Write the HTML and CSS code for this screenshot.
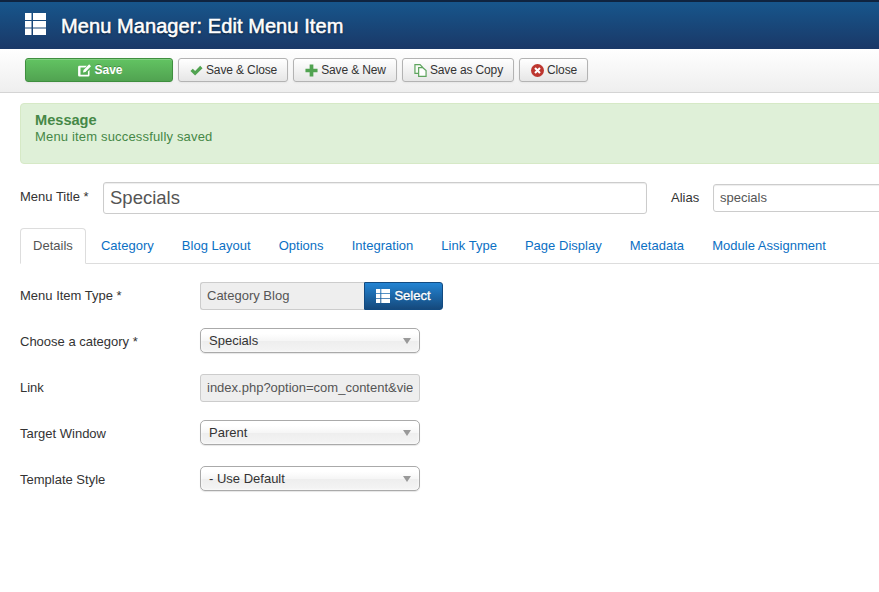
FILE: index.html
```html
<!DOCTYPE html>
<html lang="en">
<head>
<meta charset="utf-8">
<title>Menu Manager: Edit Menu Item</title>
<link rel="stylesheet" href="styles.css">
</head>
<body>
<header class="header">
  <svg class="header-icon" viewBox="0 0 21 22" width="21" height="22"><path d="M0 0h6.500v7H0zM8 0h13v7H8zM0 8h6.500v6.500H0zM8 8h13v6.500H8zM0 15.500h6.500V22H0zM8 15.500h13V22H8z" fill="#fff"/></svg>
  <h1 class="page-title">Menu Manager: Edit Menu Item</h1>
</header>
<nav class="toolbar">
  <button class="btn btn-save"><svg class="ico" viewBox="0 0 14 14" width="13" height="13"><path d="M1.500 2h8L7.800 3.700H2.700v8h8V8l1.700-1.700v5.700a1.400 1.400 0 0 1-1.400 1.400H1.500A1.400 1.400 0 0 1 .1 12V3.400A1.400 1.400 0 0 1 1.500 2z" fill="#fff"/><path d="M12 .3 14 2.300 8 8.500 5.300 9.200 6 6.500z" fill="#fff"/></svg>Save</button>
  <button class="btn"><svg class="ico" viewBox="0 0 14 14" width="13" height="13"><path d="M.5 7.500 3 5 5.500 7.500 11 2l2.500 2.500-8 8z" fill="#51a351"/></svg>Save &amp; Close</button>
  <button class="btn"><svg class="ico" viewBox="0 0 14 14" width="13" height="13"><path d="M5 .5h4V5h4.500v4H9v4.500H5V9H.5V5H5z" fill="#51a351"/></svg>Save &amp; New</button>
  <button class="btn"><svg class="ico" viewBox="0 0 14 14" width="13" height="13"><path d="M1 .7h5.500l2.500 2.500v7H1z" fill="#f7fbf5" stroke="#5fa55f" stroke-width="1.300"/><path d="M5 4h4.500l3.500 3v6.300H5z" fill="#fff" stroke="#5fa55f" stroke-width="1.300"/></svg>Save as Copy</button>
  <button class="btn"><svg class="ico" viewBox="0 0 14 14" width="13" height="13"><circle cx="7" cy="7" r="7" fill="#bd362f"/><path d="M4.300 4.300l5.400 5.400M9.700 4.300l-5.400 5.400" stroke="#fff" stroke-width="2.200"/></svg>Close</button>
</nav>
<main class="content">
  <div class="alert">
    <h4 class="alert-title">Message</h4>
    <div class="alert-text">Menu item successfully saved</div>
  </div>
  <div class="title-row">
    <label class="title-label">Menu Title *</label>
    <input class="input-title" value="Specials">
    <label class="alias-label">Alias</label>
    <input class="input-alias" value="specials">
  </div>
  <ul class="tabs">
    <li class="tab active">Details</li>
    <li class="tab">Category</li>
    <li class="tab">Blog Layout</li>
    <li class="tab">Options</li>
    <li class="tab">Integration</li>
    <li class="tab">Link Type</li>
    <li class="tab">Page Display</li>
    <li class="tab">Metadata</li>
    <li class="tab">Module Assignment</li>
  </ul>
  <div class="form">
    <div class="row">
      <label class="row-label">Menu Item Type *</label>
      <div class="append">
        <input class="readonly append-field" value="Category Blog" readonly>
        <button class="btn-select"><svg class="ico-select" viewBox="0 0 14 14" width="14" height="14"><path d="M0 0h4.300v4.300H0zM5.300 0H14v4.300H5.300zM0 5h4.300v4H0zM5.300 5H14v4H5.300zM0 9.700h4.300V14H0zM5.300 9.700H14V14H5.300z" fill="#fff"/></svg>Select</button>
      </div>
    </div>
    <div class="row">
      <label class="row-label">Choose a category *</label>
      <div class="select">Specials<span class="caret"></span></div>
    </div>
    <div class="row">
      <label class="row-label">Link</label>
      <input class="readonly link-field" value="index.php?option=com_content&amp;view=category&amp;layout=blog&amp;id=1" readonly>
    </div>
    <div class="row">
      <label class="row-label">Target Window</label>
      <div class="select">Parent<span class="caret"></span></div>
    </div>
    <div class="row">
      <label class="row-label">Template Style</label>
      <div class="select">- Use Default<span class="caret"></span></div>
    </div>
  </div>
</main>
</body>
</html>
```

FILE: styles.css
```css
* { box-sizing: border-box; }
html, body { margin: 0; height: 100%; overflow: hidden; }
body { background: #fff; color: #333; font: 13px/18px "Liberation Sans", Arial, sans-serif; width: 879px; }

.header { height: 49px; display: flex; align-items: center; padding: 0 0 0 25px; border-top: 2px solid #0f2440; background: linear-gradient(#17568c, #1a3867); }
.header-icon { flex: none; margin-top: -3px; }
.page-title { margin: 0 0 0 15px; color: #fff; font-size: 20px; line-height: 24px; font-weight: 400; letter-spacing: .08px; -webkit-text-stroke: .5px #fff; text-shadow: 0 1px 2px rgba(0,0,0,.7); white-space: nowrap; }

.toolbar { height: 44px; display: flex; align-items: flex-start; gap: 5px; padding: 9px 0 0 25px; background: linear-gradient(#fff, #eee); border-bottom: 1px solid #d4d4d4; }
.btn { height: 24px; display: inline-flex; align-items: center; justify-content: center; padding: 0 10px 0 11px; font: 12px/18px "Liberation Sans", Arial, sans-serif; letter-spacing: -.13px; color: #333; background: linear-gradient(#fff, #e6e6e6); border: 1px solid #b3b3b3; border-radius: 3px; box-shadow: inset 0 1px 0 rgba(255,255,255,.2), 0 1px 2px rgba(0,0,0,.05); white-space: nowrap; }
.btn .ico { margin-right: 3px; flex: none; }
.btn-save { width: 148px; padding: 0 0 0 3px; color: #fff; font-weight: 700; letter-spacing: 0; border-color: #3f8f3f; background: linear-gradient(#62c462, #51a351); text-shadow: 0 -1px 0 rgba(0,0,0,.25); }

.content { padding: 10px 0 0 20px; width: 1000px; }
.alert { height: 61px; padding: 8px 14px 8px 14px; background: #dff0d8; border: 1px solid #d6e9c6; border-radius: 4px; color: #468847; line-height: 16px; }
.alert-title { margin: 0; font-size: 14.6px; line-height: 17px; font-weight: 700; }
.alert-text { letter-spacing: .17px; }

.title-row { display: flex; align-items: center; margin-top: 18px; height: 32px; }
.title-label { flex: none; width: 83px; margin-top: -2px; color: #333; }
.input-title { flex: none; width: 544px; height: 32px; padding: 4px 6px; font: 18.5px/22px "Liberation Sans", Arial, sans-serif; color: #555; border: 1px solid #ccc; border-radius: 3px; outline: 0; box-shadow: inset 0 1px 1px rgba(0,0,0,.075); }
.alias-label { flex: none; margin: -1px 0 0 24px; width: 42px; }
.input-alias { flex: none; width: 300px; height: 28px; padding: 3px 6px 5px; font: 13px/18px "Liberation Sans", Arial, sans-serif; color: #555; border: 1px solid #ccc; border-radius: 3px; outline: 0; box-shadow: inset 0 1px 1px rgba(0,0,0,.075); }

.tabs { list-style: none; display: flex; margin: 14px 0 0; padding: 0; height: 36px; border-bottom: 1px solid #ddd; letter-spacing: .02px; }
.tab { height: 36px; padding: 9px 14px 0; color: #0b70c4; white-space: nowrap; }
.tab.active { padding: 8px 12px 0; color: #555; background: #fff; border: 1px solid #ddd; border-bottom-color: #fff; border-radius: 4px 4px 0 0; margin-right: 1px; }

.form { margin-top: 18px; display: flex; flex-direction: column; gap: 18px; }
.row { display: flex; align-items: center; height: 28px; }
.row-label { flex: none; width: 180px; margin-top: -1px; }
.append { display: flex; height: 28px; }
.readonly { background: #eee; border: 1px solid #ccc; color: #555; height: 28px; padding: 3px 6px 5px; font: 13px/18px "Liberation Sans", Arial, sans-serif; outline: 0; }
.append-field { width: 164px; border-right: 0; border-radius: 3px 0 0 3px; }
.link-field { width: 220px; border-radius: 3px; }
.btn-select { width: 79px; height: 28px; display: inline-flex; align-items: center; justify-content: center; color: #fff; font: 13px/18px "Liberation Sans", Arial, sans-serif; -webkit-text-stroke: .35px #fff; background: linear-gradient(#2384d3, #15497c); border: 1px solid #124a80; border-radius: 0 3px 3px 0; text-shadow: 0 -1px 0 rgba(0,0,0,.25); padding: 0; }
.ico-select { margin-right: 4px; flex: none; }
.select { position: relative; width: 220px; height: 25px; padding: 3px 8px; color: #333; background: linear-gradient(#fff 20%, #f6f6f6 50%, #eee 52%, #f4f4f4); border: 1px solid #aaa; border-radius: 5px; box-shadow: inset 0 0 3px #fff, 0 1px 1px rgba(0,0,0,.1); margin-top: -3px; }
.caret { position: absolute; right: 8px; top: 9px; width: 0; height: 0; border: 4px solid transparent; border-top: 6px solid #999; border-bottom: 0; }
```
